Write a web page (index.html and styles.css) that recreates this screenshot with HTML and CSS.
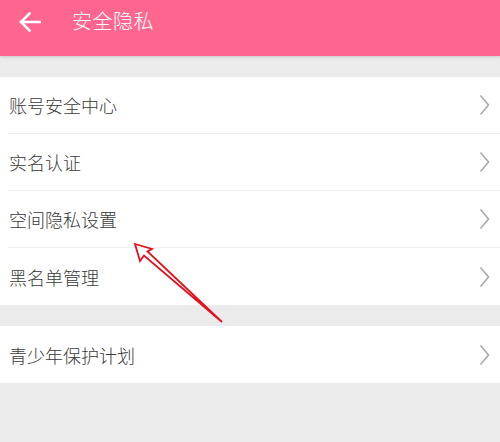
FILE: index.html
```html
<!DOCTYPE html>
<html lang="zh">
<head>
    <meta charset="UTF-8">
    <title>安全隐私</title>
    <link rel="stylesheet" href="styles.css">
</head>
<body>
    <div class="header">
        <svg class="back" width="22" height="20" viewBox="0 0 22 20">
            <path d="M2 10 H21 M10.5 1.5 L2 10 L10.5 18.5" fill="none" stroke="#fff" stroke-width="2.6" stroke-linecap="square"/>
        </svg>
        <div class="title">安全隐私</div>
    </div>

    <div class="group">
        <div class="row"><span>账号安全中心</span><svg class="chevron" width="11" height="22" viewBox="0 0 11 22"><path d="M1.5 1.5 L9.5 11 L1.5 20.5" fill="none" stroke="#aaa" stroke-width="1.6"/></svg></div>
        <div class="row"><span>实名认证</span><svg class="chevron" width="11" height="22" viewBox="0 0 11 22"><path d="M1.5 1.5 L9.5 11 L1.5 20.5" fill="none" stroke="#aaa" stroke-width="1.6"/></svg></div>
        <div class="row"><span>空间隐私设置</span><svg class="chevron" width="11" height="22" viewBox="0 0 11 22"><path d="M1.5 1.5 L9.5 11 L1.5 20.5" fill="none" stroke="#aaa" stroke-width="1.6"/></svg></div>
        <div class="row last"><span>黑名单管理</span><svg class="chevron" width="11" height="22" viewBox="0 0 11 22"><path d="M1.5 1.5 L9.5 11 L1.5 20.5" fill="none" stroke="#aaa" stroke-width="1.6"/></svg></div>
    </div>

    <div class="group">
        <div class="row last"><span>青少年保护计划</span><svg class="chevron" width="11" height="22" viewBox="0 0 11 22"><path d="M1.5 1.5 L9.5 11 L1.5 20.5" fill="none" stroke="#aaa" stroke-width="1.6"/></svg></div>
    </div>

    <!-- annotation arrow pointing at 空间隐私设置 -->
    <svg class="mark" width="500" height="442" viewBox="0 0 500 442">
        <polygon points="135,244 152,249 147.5,251.5 222,322 144,255.5 140,261" fill="none" stroke="#e5101d" stroke-width="1.8" stroke-linejoin="miter"/>
    </svg>
</body>
</html>
```

FILE: styles.css
```css
body {
    margin: 0;
    background-color: #ebebeb;
    font-family: "Noto Sans CJK SC", "Noto Sans", sans-serif;
    height: 442px;
    overflow: hidden;
    position: relative;
}
.header {
    height: 56px;
    background-color: #fe6690;
    display: flex;
    align-items: flex-start;
    padding-top: 11px;
    box-sizing: border-box;
    box-shadow: 0 1px 3px rgba(0,0,0,0.15);
}
.back {
    margin-left: 19px;
    margin-top: 1px;
}
.title {
    margin-left: 31px;
    color: white;
    font-size: 20px;
    line-height: 20px;
    letter-spacing: 0.5px;
    font-weight: 300;
}
.group {
    background-color: white;
    margin-top: 21px;
}
.row {
    height: 57px;
    box-sizing: border-box;
    margin-left: 8px;
    padding-left: 1px;
    padding-right: 10px;
    border-bottom: 1px solid #efefef;
    display: flex;
    align-items: center;
    justify-content: space-between;
    font-size: 18px;
    font-weight: 300;
    color: #3a3a3a;
}
.row.last {
    border-bottom: none;
}
.mark {
    position: absolute;
    left: 0;
    top: 0;
}
```
